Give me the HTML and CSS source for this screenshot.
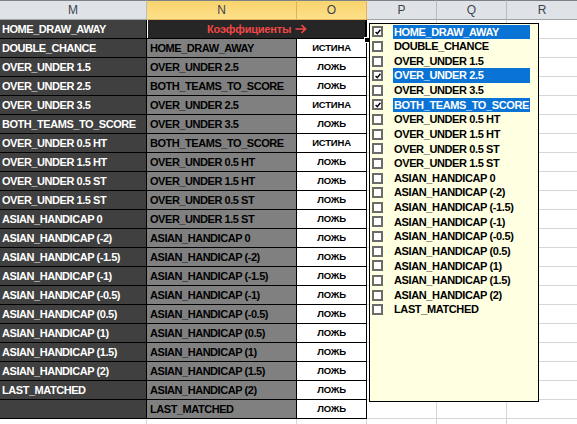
FILE: index.html
```html
<!DOCTYPE html>
<html>
<head>
<meta charset="utf-8">
<link rel="stylesheet" href="styles.css">
</head>
<body>
<div class="sheet">
  <div class="hd">M</div>
  <div class="hd hd-sel">N</div>
  <div class="hd hd-sel">O</div>
  <div class="hd">P</div>
  <div class="hd">Q</div>
  <div class="hd hd-last">R</div>

  <div class="m">HOME_DRAW_AWAY</div>
  <div class="title">Коэффициенты <svg class="arrow" viewBox="0 0 12 10" width="12" height="10"><path d="M0.5 5 H10.5 M6.5 1 L10.5 5 L6.5 9" fill="none" stroke="#f24848" stroke-width="1.7"/></svg></div>
  <div class="g"></div><div class="g"></div><div class="g g-last"></div>

  <div class="m">DOUBLE_CHANCE</div><div class="n">HOME_DRAW_AWAY</div><div class="o">ИСТИНА</div><div class="g"></div><div class="g"></div><div class="g g-last"></div>
  <div class="m">OVER_UNDER 1.5</div><div class="n">OVER_UNDER 2.5</div><div class="o">ЛОЖЬ</div><div class="g"></div><div class="g"></div><div class="g g-last"></div>
  <div class="m">OVER_UNDER 2.5</div><div class="n">BOTH_TEAMS_TO_SCORE</div><div class="o">ЛОЖЬ</div><div class="g"></div><div class="g"></div><div class="g g-last"></div>
  <div class="m">OVER_UNDER 3.5</div><div class="n">OVER_UNDER 2.5</div><div class="o">ИСТИНА</div><div class="g"></div><div class="g"></div><div class="g g-last"></div>
  <div class="m">BOTH_TEAMS_TO_SCORE</div><div class="n">OVER_UNDER 3.5</div><div class="o">ЛОЖЬ</div><div class="g"></div><div class="g"></div><div class="g g-last"></div>
  <div class="m">OVER_UNDER 0.5 HT</div><div class="n">BOTH_TEAMS_TO_SCORE</div><div class="o">ИСТИНА</div><div class="g"></div><div class="g"></div><div class="g g-last"></div>
  <div class="m">OVER_UNDER 1.5 HT</div><div class="n">OVER_UNDER 0.5 HT</div><div class="o">ЛОЖЬ</div><div class="g"></div><div class="g"></div><div class="g g-last"></div>
  <div class="m">OVER_UNDER 0.5 ST</div><div class="n">OVER_UNDER 1.5 HT</div><div class="o">ЛОЖЬ</div><div class="g"></div><div class="g"></div><div class="g g-last"></div>
  <div class="m">OVER_UNDER 1.5 ST</div><div class="n">OVER_UNDER 0.5 ST</div><div class="o">ЛОЖЬ</div><div class="g"></div><div class="g"></div><div class="g g-last"></div>
  <div class="m">ASIAN_HANDICAP 0</div><div class="n">OVER_UNDER 1.5 ST</div><div class="o">ЛОЖЬ</div><div class="g"></div><div class="g"></div><div class="g g-last"></div>
  <div class="m">ASIAN_HANDICAP (-2)</div><div class="n">ASIAN_HANDICAP 0</div><div class="o">ЛОЖЬ</div><div class="g"></div><div class="g"></div><div class="g g-last"></div>
  <div class="m">ASIAN_HANDICAP (-1.5)</div><div class="n">ASIAN_HANDICAP (-2)</div><div class="o">ЛОЖЬ</div><div class="g"></div><div class="g"></div><div class="g g-last"></div>
  <div class="m">ASIAN_HANDICAP (-1)</div><div class="n">ASIAN_HANDICAP (-1.5)</div><div class="o">ЛОЖЬ</div><div class="g"></div><div class="g"></div><div class="g g-last"></div>
  <div class="m">ASIAN_HANDICAP (-0.5)</div><div class="n">ASIAN_HANDICAP (-1)</div><div class="o">ЛОЖЬ</div><div class="g"></div><div class="g"></div><div class="g g-last"></div>
  <div class="m">ASIAN_HANDICAP (0.5)</div><div class="n">ASIAN_HANDICAP (-0.5)</div><div class="o">ЛОЖЬ</div><div class="g"></div><div class="g"></div><div class="g g-last"></div>
  <div class="m">ASIAN_HANDICAP (1)</div><div class="n">ASIAN_HANDICAP (0.5)</div><div class="o">ЛОЖЬ</div><div class="g"></div><div class="g"></div><div class="g g-last"></div>
  <div class="m">ASIAN_HANDICAP (1.5)</div><div class="n">ASIAN_HANDICAP (1)</div><div class="o">ЛОЖЬ</div><div class="g"></div><div class="g"></div><div class="g g-last"></div>
  <div class="m">ASIAN_HANDICAP (2)</div><div class="n">ASIAN_HANDICAP (1.5)</div><div class="o">ЛОЖЬ</div><div class="g"></div><div class="g"></div><div class="g g-last"></div>
  <div class="m">LAST_MATCHED</div><div class="n">ASIAN_HANDICAP (2)</div><div class="o">ЛОЖЬ</div><div class="g"></div><div class="g"></div><div class="g g-last"></div>
  <div class="m"></div><div class="n">LAST_MATCHED</div><div class="o">ЛОЖЬ</div><div class="g"></div><div class="g"></div><div class="g g-last"></div>

  <div class="w"></div><div class="w"></div><div class="w"></div><div class="g"></div><div class="g"></div><div class="g g-last"></div>
</div>

<div class="handle"></div>

<div class="popup">
  <div class="item sel"><span class="cb"><svg viewBox="0 0 6 6" width="6" height="6"><polyline points="0.6,3 2.3,4.7 5.4,0.8" fill="none" stroke="#000" stroke-width="1.4"/></svg></span><span class="label">HOME_DRAW_AWAY</span></div>
  <div class="item"><span class="cb"></span><span class="label">DOUBLE_CHANCE</span></div>
  <div class="item"><span class="cb"></span><span class="label">OVER_UNDER 1.5</span></div>
  <div class="item sel"><span class="cb"><svg viewBox="0 0 6 6" width="6" height="6"><polyline points="0.6,3 2.3,4.7 5.4,0.8" fill="none" stroke="#000" stroke-width="1.4"/></svg></span><span class="label">OVER_UNDER 2.5</span></div>
  <div class="item"><span class="cb"></span><span class="label">OVER_UNDER 3.5</span></div>
  <div class="item sel"><span class="cb"><svg viewBox="0 0 6 6" width="6" height="6"><polyline points="0.6,3 2.3,4.7 5.4,0.8" fill="none" stroke="#000" stroke-width="1.4"/></svg></span><span class="label">BOTH_TEAMS_TO_SCORE</span></div>
  <div class="item"><span class="cb"></span><span class="label">OVER_UNDER 0.5 HT</span></div>
  <div class="item"><span class="cb"></span><span class="label">OVER_UNDER 1.5 HT</span></div>
  <div class="item"><span class="cb"></span><span class="label">OVER_UNDER 0.5 ST</span></div>
  <div class="item"><span class="cb"></span><span class="label">OVER_UNDER 1.5 ST</span></div>
  <div class="item"><span class="cb"></span><span class="label">ASIAN_HANDICAP 0</span></div>
  <div class="item"><span class="cb"></span><span class="label">ASIAN_HANDICAP (-2)</span></div>
  <div class="item"><span class="cb"></span><span class="label">ASIAN_HANDICAP (-1.5)</span></div>
  <div class="item"><span class="cb"></span><span class="label">ASIAN_HANDICAP (-1)</span></div>
  <div class="item"><span class="cb"></span><span class="label">ASIAN_HANDICAP (-0.5)</span></div>
  <div class="item"><span class="cb"></span><span class="label">ASIAN_HANDICAP (0.5)</span></div>
  <div class="item"><span class="cb"></span><span class="label">ASIAN_HANDICAP (1)</span></div>
  <div class="item"><span class="cb"></span><span class="label">ASIAN_HANDICAP (1.5)</span></div>
  <div class="item"><span class="cb"></span><span class="label">ASIAN_HANDICAP (2)</span></div>
  <div class="item"><span class="cb"></span><span class="label">LAST_MATCHED</span></div>
</div>
</body>
</html>
```

FILE: styles.css
```css
html, body {
  margin: 0;
  padding: 0;
  background: #ffffff;
  overflow: hidden;
}
body {
  width: 577px;
  height: 424px;
  position: relative;
  font-family: "Liberation Sans", Arial, sans-serif;
}
.sheet {
  display: grid;
  grid-template-columns: 147px 150px 70px 70px 70px 70px;
  grid-template-rows: 20px repeat(21, 19px) 19px;
}
.sheet > div {
  box-sizing: border-box;
  white-space: nowrap;
  overflow: hidden;
}
.hd {
  background: #dfe3e8;
  border-top: 1px solid #7d8188;
  border-bottom: 1px solid #9ea3aa;
  border-right: 1px solid #b8bdc4;
  color: #3b4350;
  font-size: 12px;
  text-align: center;
  line-height: 18px;
}
.hd-sel {
  background: linear-gradient(#f8d46d, #fde08a);
  border-right-color: #e1b25a;
  border-bottom-color: #e1b25a;
}
.hd-last { border-right: none; }
.m {
  background: #404040;
  color: #ffffff;
  font-weight: bold;
  font-size: 11px;
  letter-spacing: -0.45px;
  line-height: 18px;
  padding-left: 2px;
  border-bottom: 1px solid #000;
  border-right: 1px solid #000;
}
.title {
  grid-column: span 2;
  background: #262626;
  color: #f24848;
  font-weight: bold;
  font-size: 11px;
  letter-spacing: -0.2px;
  text-align: center;
  line-height: 18px;
  padding-left: 2px;
  border-bottom: 1px solid #000;
  border-right: 2px solid #000;
  box-shadow: inset 1px 0 0 #ffffff;
}
.arrow {
  display: inline-block;
  vertical-align: -1px;
  margin-left: 1px;
}
.n {
  background: #808080;
  color: #000000;
  font-weight: bold;
  font-size: 11px;
  letter-spacing: -0.45px;
  line-height: 18px;
  padding-left: 3px;
  border-bottom: 1px solid #000;
  border-right: 1px solid #000;
}
.o {
  background: #ffffff;
  color: #000000;
  font-weight: bold;
  font-size: 9.5px;
  letter-spacing: -0.2px;
  text-align: center;
  line-height: 18px;
  border-bottom: 1px solid #000;
  border-right: 1px solid #000;
}
.g {
  background: #ffffff;
  border-bottom: 1px solid #d6d6d6;
  border-right: 1px solid #d6d6d6;
}
.g-last { border-right: none; }
.w {
  background: #ffffff;
  border-right: 1px solid #d6d6d6;
}
.handle {
  position: absolute;
  left: 364px;
  top: 37px;
  width: 4px;
  height: 4px;
  background: #000;
  border: 1px solid #fff;
}
.popup {
  position: absolute;
  left: 369px;
  top: 23px;
  width: 170px;
  height: 379px;
  box-sizing: border-box;
  border: 1px solid #000;
  background: #ffffe1;
  padding-top: 0.5px;
}
.item {
  display: flex;
  align-items: center;
  height: 14.63px;
}
.cb {
  box-sizing: border-box;
  width: 11px;
  height: 11px;
  margin-left: 2px;
  margin-right: 10px;
  border: 2px solid #6b6b6b;
  background: #ffffff;
  display: flex;
  align-items: center;
  justify-content: center;
}
.cb svg { display: block; }
.label {
  flex: 0 0 137px;
  height: 100%;
  box-sizing: border-box;
  padding-left: 1px;
  font-weight: bold;
  font-size: 11px;
  letter-spacing: -0.38px;
  line-height: 14.63px;
  color: #000;
  white-space: nowrap;
  overflow: hidden;
}
.sel .label {
  background: #0a74d6;
  color: #ffffff;
}
```
